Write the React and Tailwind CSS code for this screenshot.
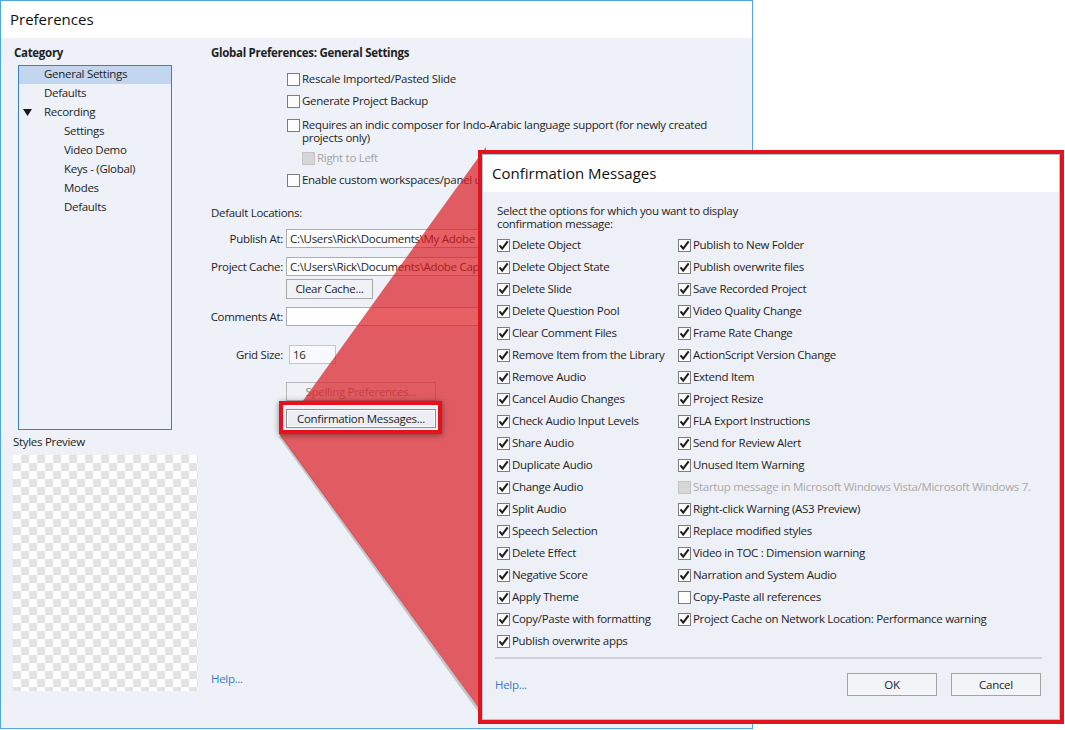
const tree = [
  { label: 'General Settings', level: 0, selected: true },
  { label: 'Defaults', level: 0 },
  { label: 'Recording', level: 0, open: true },
  { label: 'Settings', level: 1 },
  { label: 'Video Demo', level: 1 },
  { label: 'Keys - (Global)', level: 1 },
  { label: 'Modes', level: 1 },
  { label: 'Defaults', level: 1 },
]

const leftOptions = [
  'Delete Object',
  'Delete Object State',
  'Delete Slide',
  'Delete Question Pool',
  'Clear Comment Files',
  'Remove Item from the Library',
  'Remove Audio',
  'Cancel Audio Changes',
  'Check Audio Input Levels',
  'Share Audio',
  'Duplicate Audio',
  'Change Audio',
  'Split Audio',
  'Speech Selection',
  'Delete Effect',
  'Negative Score',
  'Apply Theme',
  'Copy/Paste with formatting',
  'Publish overwrite apps',
]

const rightOptions = [
  { label: 'Publish to New Folder', checked: true },
  { label: 'Publish overwrite files', checked: true },
  { label: 'Save Recorded Project', checked: true },
  { label: 'Video Quality Change', checked: true },
  { label: 'Frame Rate Change', checked: true },
  { label: 'ActionScript Version Change', checked: true },
  { label: 'Extend Item', checked: true },
  { label: 'Project Resize', checked: true },
  { label: 'FLA Export Instructions', checked: true },
  { label: 'Send for Review Alert', checked: true },
  { label: 'Unused Item Warning', checked: true },
  { label: 'Startup message in Microsoft Windows Vista/Microsoft Windows 7.', disabled: true },
  { label: 'Right-click Warning (AS3 Preview)', checked: true },
  { label: 'Replace modified styles', checked: true },
  { label: 'Video in TOC : Dimension warning', checked: true },
  { label: 'Narration and System Audio', checked: true },
  { label: 'Copy-Paste all references' },
  { label: 'Project Cache on Network Location: Performance warning', checked: true },
]

function CheckBox({ checked = false, disabled = false }) {
  return (
    <span
      className={
        disabled
          ? 'flex h-[13px] w-[13px] shrink-0 items-center justify-center border border-[#c4c4c4] bg-[#d6d6d6]'
          : 'flex h-[13px] w-[13px] shrink-0 items-center justify-center border border-[#7d7d7d] bg-[#fcfcfc]'
      }
    >
      {checked && (
        <svg width="11" height="11" viewBox="0 0 11 11">
          <path d="M1.5 5.3 L4.2 8.6 L9.7 1.4" fill="none" stroke="#1c1c1c" strokeWidth="2" />
        </svg>
      )}
    </span>
  )
}

function Option({ label, checked, disabled }) {
  return (
    <div className="flex h-[22px] items-center gap-[2px]">
      <CheckBox checked={checked} disabled={disabled} />
      <span className={disabled ? 'whitespace-nowrap text-[#a9a9a9]' : 'whitespace-nowrap'}>{label}</span>
    </div>
  )
}

function Field({ label, value }) {
  return (
    <div className="flex items-center">
      <div className="mr-[3px] flex w-[72px] shrink-0 justify-end">
        <span className="whitespace-nowrap">{label}</span>
      </div>
      <div className="flex h-[19px] flex-1 items-center overflow-hidden border border-[#acaeb4] bg-white px-[3px] whitespace-nowrap">
        {value}
      </div>
    </div>
  )
}

function Preferences() {
  return (
    <div className="flex h-[729px] w-[753px] flex-col border border-[#52a7e0] bg-[#eef1f8]">
      <div className="flex h-[37px] shrink-0 items-center bg-white pl-[9px] text-[15px] tracking-normal text-[#111]">
        Preferences
      </div>

      <div className="flex flex-1">
        <div className="flex w-[210px] shrink-0 flex-col pl-[12px] pt-[7px]">
          <div className="ml-[1px] h-[16px] leading-[16px] font-bold">Category</div>
          <div className="mt-[4px] ml-[5px] h-[365px] w-[154px] border border-[#3b7fc4]">
            {tree.map((item, i) => (
              <div key={i} className="h-[19px]">
                <div
                  className={
                    item.selected
                      ? 'relative flex h-[18px] items-start bg-[#c2d6ef] leading-[16px]'
                      : 'relative flex h-[18px] items-start leading-[16px]'
                  }
                >
                  {item.open && (
                    <svg className="absolute left-[4px] top-[5px]" width="9" height="7" viewBox="0 0 9 7">
                      <path d="M0 0 H9 L4.5 7 Z" fill="#1a1a1a" />
                    </svg>
                  )}
                  <span className={item.level ? 'pl-[45px]' : 'pl-[25px]'}>{item.label}</span>
                </div>
              </div>
            ))}
          </div>
          <div className="mt-[4px] h-[16px] leading-[16px]">Styles Preview</div>
          <div className="mt-[5px] h-[236px] w-[185px] bg-[conic-gradient(#e3e3e3_25%,#ffffff_0_50%,#e3e3e3_0_75%,#ffffff_0)] bg-[length:16px_16px]" />
        </div>

        <div className="flex flex-1 flex-col pr-[12px] pt-[7px]">
          <div className="h-[16px] leading-[16px] font-bold">Global Preferences: General Settings</div>

          <div className="mt-[7px] pl-[76px]">
            <div className="flex h-[22px] items-center gap-[2px]">
              <CheckBox />
              <span>Rescale Imported/Pasted Slide</span>
            </div>
            <div className="flex h-[22px] items-center gap-[2px]">
              <CheckBox />
              <span>Generate Project Backup</span>
            </div>
            <div className="flex h-[35px] items-start gap-[2px] pt-[6px]">
              <span className="mt-[1px]">
                <CheckBox />
              </span>
              <span className="leading-[13px]">
                Requires an indic composer for Indo-Arabic language support (for newly created
                <br />
                projects only)
              </span>
            </div>
            <div className="flex h-[22px] items-center gap-[2px] pl-[15px]">
              <CheckBox disabled />
              <span className="text-[#a3a3a3]">Right to Left</span>
            </div>
            <div className="flex h-[22px] items-center gap-[2px]">
              <CheckBox />
              <span className="whitespace-nowrap">Enable custom workspaces/panel undocking</span>
            </div>
          </div>

          <div className="mt-[14px] h-[16px] leading-[16px]">Default Locations:</div>
          <div className="mt-[8px]">
            <Field label="Publish At:" value={'C:\\Users\\Rick\\Documents\\My Adobe Captivate Projects'} />
          </div>
          <div className="mt-[9px]">
            <Field label="Project Cache:" value={'C:\\Users\\Rick\\Documents\\Adobe Captivate Cached Projects'} />
          </div>
          <button className="mt-[3px] ml-[75px] h-[20px] w-[87px] border border-[#a9a9a9] bg-[#f1f2f7]">
            Clear Cache...
          </button>
          <div className="mt-[8px]">
            <Field label="Comments At:" value="" />
          </div>
          <div className="mt-[19px] flex items-center">
            <span className="mr-[6px] w-[72px] text-right">Grid Size:</span>
            <div className="flex h-[19px] w-[47px] items-center border border-[#c3c5ca] bg-[#f8f9fc] px-[3px]">16</div>
          </div>
          <button className="mt-[18px] ml-[75px] h-[19px] w-[150px] border border-[#b8b8b8] bg-[#eff1f6] text-[#8c8c8c]">
            Spelling Preferences...
          </button>
          <div className="relative z-20 mt-[8px] ml-[75px] h-[19px] w-[150px]">
            <div className="absolute left-[-7px] top-[-8px] h-[33px] w-[163px] border-4 border-[#e8101a] bg-[#eef1f8] shadow-[0_1px_6px_rgba(0,0,0,0.45)]" />
            <button className="relative h-[19px] w-[150px] border border-[#8e8e8e] bg-[#eceef4] shadow-[inset_0_0_0_1px_#ffffff]">
              Confirmation Messages...
            </button>
          </div>

          <div className="mt-auto mb-[41px] h-[16px] leading-[16px] text-[#3a7cc0]">Help...</div>
        </div>
      </div>
    </div>
  )
}

function ConfirmationDialog() {
  return (
    <div className="absolute left-[478px] top-[150px] z-30 flex h-[574px] w-[586px] flex-col border-4 border-[#e3131b]">
      <div className="flex flex-1 flex-col border border-[#a9c4e0]">
        <div className="flex h-[37px] shrink-0 items-center bg-white pl-[9px] text-[15px] tracking-normal text-[#111]">
          Confirmation Messages
        </div>
        <div className="flex flex-1 flex-col bg-[#eef0f7] pl-[14px] pt-[12px]">
          <div className="leading-[13px]">
            Select the options for which you want to display
            <br />
            confirmation message:
          </div>
          <div className="mt-[4px] flex">
            <div className="w-[181px] shrink-0">
              {leftOptions.map((label) => (
                <Option key={label} label={label} checked />
              ))}
            </div>
            <div>
              {rightOptions.map((o) => (
                <Option key={o.label} label={o.label} checked={o.checked} disabled={o.disabled} />
              ))}
            </div>
          </div>
          <div className="mt-[5px] -ml-[2px] mr-[17px] h-[2px] bg-[#cfd1d7]" />
          <div className="mt-[14px] -ml-[2px] flex items-center pr-[18px]">
            <span className="text-[#3a7cc0]">Help...</span>
            <div className="ml-auto flex gap-[14px]">
              <button className="h-[23px] w-[90px] border border-[#a3a3a3] bg-[#f3f4f8]">OK</button>
              <button className="h-[23px] w-[90px] border border-[#a3a3a3] bg-[#f3f4f8]">Cancel</button>
            </div>
          </div>
        </div>
      </div>
    </div>
  )
}

function App() {
  return (
    <div className="relative h-[730px] w-[1065px] overflow-hidden bg-white font-['Segoe_UI','Open_Sans',sans-serif] text-[11.5px] tracking-[-0.3px] text-[#1e1e1e]">
      <Preferences />

      {/* callout wedge from the button to the dialog */}
      <svg className="pointer-events-none absolute left-0 top-0 z-10" width="1065" height="730" viewBox="0 0 1065 730">
        <path d="M280 436 L486 720" stroke="rgba(0,0,0,0.18)" strokeWidth="3" fill="none" />
        <polygon points="486,147 486,718 279,434" fill="rgba(220,28,34,0.7)" />
      </svg>

      <ConfirmationDialog />
    </div>
  )
}

export default App
